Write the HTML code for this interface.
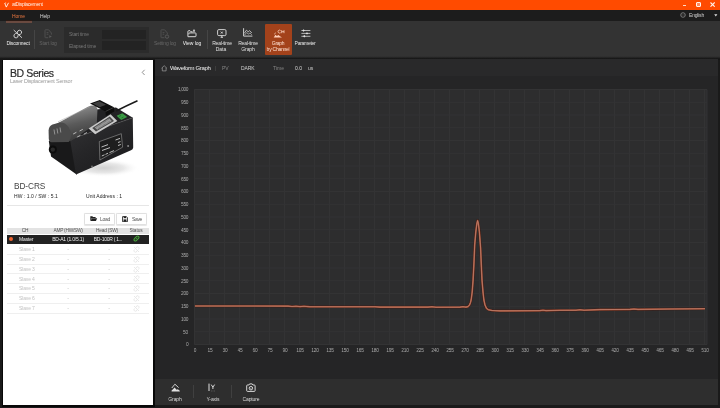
<!DOCTYPE html><html><head><meta charset="utf-8"><style>
html,body{margin:0;padding:0;width:720px;height:408px;overflow:hidden;background:#1a1a1a}
.b{position:absolute}
.t{position:absolute;white-space:nowrap;font-family:"Liberation Sans",sans-serif;line-height:1;will-change:transform}
</style></head><body>
<div class="b" style="left:0px;top:0px;width:720px;height:10px;background:#ff4b00;"></div>
<div class="b" style="left:0px;top:10px;width:720px;height:11px;background:#1c1c1c;"></div>
<div class="b" style="left:0px;top:21px;width:720px;height:35.5px;background:#333333;"></div>
<div class="b" style="left:0px;top:59px;width:720px;height:349px;background:#1a1a1a;"></div>
<div class="b" style="left:1.5px;top:58.3px;width:153.5px;height:348.7px;background:#080808;"></div>
<div class="b" style="left:0px;top:56px;width:720px;height:3.5px;background:linear-gradient(#333 0%,#2e2e2e 18%,#141414 72%,#181818 100%);"></div>
<div class="b" style="left:3px;top:59.6px;width:150px;height:345.9px;background:#ffffff;"></div>
<div class="b" style="left:155px;top:59.3px;width:562.6px;height:16.7px;background:#29292a;"></div>
<div class="b" style="left:155px;top:76px;width:562.6px;height:302.5px;background:#252526;"></div>
<div class="b" style="left:155px;top:378.5px;width:562.6px;height:26.8px;background:#2e2e2e;"></div>
<div class="t" style="left:12.00px;top:2.19px;font-size:5px;color:#ffeee6;letter-spacing:-0.28px;font-weight:400;">atDisplacement</div>
<svg class="b" style="left:3.5px;top:2px;" width="6" height="6" viewBox="0 0 6 6"><path d="M0.7 1.0 L2.3 5.1 L4.5 0.8" stroke="#fff" stroke-width="0.85" fill="none" stroke-linejoin="round"/><path d="M1.0 0.9 L2.2 0.9" stroke="#fff" stroke-width="0.5"/></svg>
<div class="b" style="left:682.6px;top:5.4px;width:3.7px;height:1.0px;background:#ffd8c4;"></div>
<div class="b" style="left:696px;top:2.1px;width:3px;height:3px;border:1px solid #fff3ec;border-radius:1px;background:#ff8a60"></div>
<svg class="b" style="left:710.3px;top:2.1px;" width="5.2" height="5.2" viewBox="0 0 5.2 5.2"><path d="M0.5 0.5 L4.7 4.7 M4.7 0.5 L0.5 4.7" stroke="#fff3ec" stroke-width="1.1"/></svg>
<div class="t" style="left:12.00px;top:13.89px;font-size:5px;color:#e67640;letter-spacing:-0.12px;font-weight:400;">Home</div>
<div class="t" style="left:40.00px;top:13.89px;font-size:5px;color:#d6d6d6;letter-spacing:-0.05px;font-weight:400;">Help</div>
<div class="b" style="left:5.5px;top:20px;width:26.5px;height:1px;background:#2a1a14;"></div>
<div class="b" style="left:5.5px;top:21.2px;width:26.5px;height:1.4px;background:#6a4a40;"></div>
<svg class="b" style="left:679.5px;top:12px;" width="6" height="6" viewBox="0 0 6 6"><circle cx="3" cy="3" r="2.3" fill="none" stroke="#999" stroke-width="0.7"/><path d="M0.8 3 L5.2 3" stroke="#777" stroke-width="0.4"/></svg>
<div class="t" style="left:689.40px;top:13.09px;font-size:5px;color:#d0d0d0;letter-spacing:-0.2px;font-weight:400;">English</div>
<svg class="b" style="left:713.5px;top:13.6px;" width="4" height="3" viewBox="0 0 4 3"><path d="M0.2 0.3 L3.4 0.3 L1.8 2.4Z" fill="#ddd"/></svg>
<div class="b" style="left:33.5px;top:30.3px;width:0.8px;height:18.400000000000002px;background:#454545;"></div>
<div class="b" style="left:206.5px;top:30.3px;width:0.8px;height:18.400000000000002px;background:#454545;"></div>
<div class="t" style="left:17.90px;transform:translateX(-50%);top:41.29px;font-size:5px;color:#f2f2f2;letter-spacing:-0.15px;font-weight:400;">Disconnect</div>
<div class="t" style="left:47.90px;transform:translateX(-50%);top:41.29px;font-size:5px;color:#666;letter-spacing:-0.12px;font-weight:400;">Start log</div>
<div class="b" style="left:64.3px;top:27.4px;width:85.2px;height:26.1px;background:#2b2b2b;"></div>
<div class="t" style="left:69.00px;top:32.19px;font-size:5px;color:#777;letter-spacing:-0.15px;font-weight:400;">Start time</div>
<div class="t" style="left:69.00px;top:43.69px;font-size:5px;color:#777;letter-spacing:-0.15px;font-weight:400;">Elapsed time</div>
<div class="b" style="left:101.8px;top:30px;width:44.2px;height:9px;background:#232323;"></div>
<div class="b" style="left:101.8px;top:41.4px;width:44.2px;height:8.8px;background:#232323;"></div>
<div class="t" style="left:164.80px;transform:translateX(-50%);top:41.49px;font-size:5px;color:#666;letter-spacing:-0.15px;font-weight:400;">Setting log</div>
<div class="t" style="left:191.60px;transform:translateX(-50%);top:41.49px;font-size:5px;color:#f2f2f2;letter-spacing:-0.05px;font-weight:400;">View log</div>
<div class="t" style="left:221.50px;transform:translateX(-50%);top:41.49px;font-size:5px;color:#e2e2e2;letter-spacing:-0.2px;font-weight:400;">Real-time</div>
<div class="t" style="left:220.80px;transform:translateX(-50%);top:46.79px;font-size:5px;color:#e2e2e2;letter-spacing:-0.05px;font-weight:400;">Data</div>
<div class="t" style="left:248.30px;transform:translateX(-50%);top:41.49px;font-size:5px;color:#e2e2e2;letter-spacing:-0.2px;font-weight:400;">Real-time</div>
<div class="t" style="left:247.70px;transform:translateX(-50%);top:46.79px;font-size:5px;color:#e2e2e2;letter-spacing:-0.1px;font-weight:400;">Graph</div>
<div class="b" style="left:265.1px;top:24.2px;width:27.1px;height:30.8px;background:#a3421b;border-radius:1px"></div>
<div class="t" style="left:278.40px;transform:translateX(-50%);top:41.29px;font-size:5px;color:#ffe2d4;letter-spacing:-0.3px;font-weight:400;">Graph</div>
<div class="t" style="left:278.40px;transform:translateX(-50%);top:46.89px;font-size:5px;color:#ffe2d4;letter-spacing:-0.25px;font-weight:400;">by Channel</div>
<div class="t" style="left:305.20px;transform:translateX(-50%);top:41.29px;font-size:5px;color:#e6e6e6;letter-spacing:-0.28px;font-weight:400;">Parameter</div>
<svg class="b" style="left:13px;top:28.5px;" width="10" height="10" viewBox="0 0 10 10"><g fill="none" stroke="#e0e0e0" stroke-width="0.9" stroke-linecap="round"><path d="M1 1.3 L8.7 8.5"/><path d="M4.6 4.4 L4.4 3.6 Q4.2 1.6 6.2 1.2 Q8.2 1.0 8.6 3.0 Q8.8 4.6 7.2 5.4 L6.2 5.6"/><path d="M5.0 6.0 L5.1 6.6 Q5.2 8.6 3.2 8.9 Q1.2 9.0 0.9 7.0 Q0.8 5.4 2.4 4.6 L3.4 4.4"/></g></svg>
<svg class="b" style="left:43.6px;top:28.6px;" width="9" height="10" viewBox="0 0 9 10"><g fill="none" stroke="#555" stroke-width="0.8"><path d="M4.2 8.7 L1.4 8.7 Q1 8.7 1 8.3 L1 1.2 Q1 0.8 1.4 0.8 L4.6 0.8 L7.4 4 L7.4 5.6"/><path d="M2.6 3.6 L4.4 3.6 M2.6 5.2 L4.4 5.2"/></g><path d="M5.3 6.3 L7.8 7.6 L5.3 8.9 Z" fill="#5a5a5a"/></svg>
<svg class="b" style="left:160.4px;top:28.6px;" width="10" height="10" viewBox="0 0 10 10"><g fill="none" stroke="#555" stroke-width="0.8"><path d="M4.4 8.7 L1.4 8.7 Q1 8.7 1 8.3 L1 1.2 Q1 0.8 1.4 0.8 L4.6 0.8 L7.4 4 L7.4 5.2"/><path d="M2.6 3.6 L4.4 3.6 M2.6 5.2 L4.2 5.2"/></g><circle cx="7" cy="7.6" r="1.7" fill="none" stroke="#5a5a5a" stroke-width="0.9"/></svg>
<svg class="b" style="left:186.6px;top:28.8px;" width="10" height="9" viewBox="0 0 10 9"><g fill="none" stroke="#e0e0e0" stroke-width="0.95" stroke-linejoin="round"><path d="M0.9 7.6 L0.9 2.6 Q0.9 1.7 1.8 1.7 L3 1.7 L4 2.8 L5.6 2.8"/><path d="M0.9 7.7 L8.2 7.7 Q9 7.7 9 6.9 L9 4.6 Q9 3.9 8.3 3.9 L2.6 3.9 Q1.9 3.9 1.9 4.6 L1.9 5.3"/></g><path d="M7 0.2 L8.3 1.6 L7.6 1.6 L7.6 3 L6.4 3 L6.4 1.6 L5.7 1.6 Z" fill="#e0e0e0"/></svg>
<svg class="b" style="left:216.6px;top:28.9px;" width="10" height="9" viewBox="0 0 10 9"><g fill="none" stroke="#e0e0e0" stroke-width="0.9"><rect x="0.6" y="0.6" width="8.4" height="6" rx="1.2"/><path d="M3.6 8.3 L6 8.3 M4.8 6.6 L4.8 8.3"/></g><path d="M3.4 2.5 L6.2 4.7 M6.2 2.5 L3.4 4.7" stroke="#e0e0e0" stroke-width="0.5"/><circle cx="4.8" cy="3.6" r="0.6" fill="#e0e0e0"/></svg>
<svg class="b" style="left:243px;top:28.3px;" width="10" height="9" viewBox="0 0 10 9"><g fill="none" stroke="#e0e0e0" stroke-width="0.9"><path d="M0.6 0.2 L0.6 8.1 L9.4 8.1"/></g><path d="M1.4 5.2 L3.4 2.2 L5.2 3.8 L6.6 2.6 L8.8 5" fill="none" stroke="#e0e0e0" stroke-width="0.75"/><path d="M1.6 7.0 L3.6 4.6 L5.4 6 L7 5 L8.8 6.8" fill="none" stroke="#e0e0e0" stroke-width="0.6"/></svg>
<svg class="b" style="left:273px;top:28.5px;" width="12" height="9" viewBox="0 0 12 9"><g fill="none" stroke="#ffd8c6" stroke-width="0.75"><path d="M7.6 1.5 Q6.9 0.9 6.2 1.1 Q5.0 1.5 5.0 2.6 Q5.1 3.8 6.3 4.1 Q7.1 4.2 7.6 3.7"/><path d="M8.7 1.2 L8.7 4.2 M11 1.2 L11 4.2 M8.7 2.7 L11 2.7"/><path d="M1.2 5.2 L2.8 3.8"/></g><path d="M0.7 8.4 L2.5 5.7 L3.9 7.0 L5.4 6.0 L7.0 7.2 L9 8.4 Z" fill="#ffd0bc"/></svg>
<svg class="b" style="left:300.6px;top:29px;" width="10" height="9" viewBox="0 0 10 9"><g stroke="#e0e0e0" stroke-width="0.75"><path d="M0.4 1.5 L9.4 1.5 M0.4 4.4 L9.4 4.4 M0.4 7.3 L9.4 7.3"/></g><g fill="#e0e0e0"><path d="M2.6 0.3 L3.8 1.5 L2.6 2.7 L1.4 1.5Z"/><path d="M6 3.2 L7.2 4.4 L6 5.6 L4.8 4.4Z"/><path d="M3.3 6.1 L4.5 7.3 L3.3 8.5 L2.1 7.3Z"/></g></svg>
<svg class="b" style="left:161px;top:65px;" width="6.5" height="6.5" viewBox="0 0 6.5 6.5"><path d="M0.6 3.2 L3.2 0.7 L5.8 3.2 M1.3 2.6 L1.3 5.9 L5.1 5.9 L5.1 2.6" fill="none" stroke="#a8a8a8" stroke-width="0.65"/></svg>
<div class="t" style="left:169.80px;top:65.41px;font-size:6px;color:#f0f0f0;letter-spacing:-0.36px;font-weight:400;">Waveform Graph</div>
<div class="b" style="left:215.4px;top:65.6px;width:0.6px;height:5.4px;background:#3c3c3c;"></div>
<div class="t" style="left:222.00px;top:66.49px;font-size:5px;color:#858585;letter-spacing:0px;font-weight:400;">PV</div>
<div class="t" style="left:240.50px;top:66.49px;font-size:5px;color:#cccccc;letter-spacing:-0.1px;font-weight:400;">DARK</div>
<div class="t" style="left:272.50px;top:66.49px;font-size:5px;color:#858585;letter-spacing:0px;font-weight:400;">Time</div>
<div class="t" style="left:295.00px;top:66.49px;font-size:5px;color:#dadada;letter-spacing:0.1px;font-weight:400;">0.0</div>
<div class="t" style="left:307.60px;top:66.49px;font-size:5px;color:#cccccc;letter-spacing:0px;font-weight:400;">us</div>
<svg class="b" style="left:0;top:0" width="720" height="408" viewBox="0 0 720 408"><rect x="194.0" y="89.0" width="513.0" height="256.0" fill="#2d2d2e"/><line x1="194.50" y1="89.5" x2="194.50" y2="344.5" stroke="#333334" stroke-width="1"/><line x1="209.50" y1="89.5" x2="209.50" y2="344.5" stroke="#333334" stroke-width="1"/><line x1="224.50" y1="89.5" x2="224.50" y2="344.5" stroke="#333334" stroke-width="1"/><line x1="239.50" y1="89.5" x2="239.50" y2="344.5" stroke="#333334" stroke-width="1"/><line x1="254.50" y1="89.5" x2="254.50" y2="344.5" stroke="#333334" stroke-width="1"/><line x1="269.50" y1="89.5" x2="269.50" y2="344.5" stroke="#333334" stroke-width="1"/><line x1="284.50" y1="89.5" x2="284.50" y2="344.5" stroke="#333334" stroke-width="1"/><line x1="299.50" y1="89.5" x2="299.50" y2="344.5" stroke="#333334" stroke-width="1"/><line x1="314.50" y1="89.5" x2="314.50" y2="344.5" stroke="#333334" stroke-width="1"/><line x1="329.50" y1="89.5" x2="329.50" y2="344.5" stroke="#333334" stroke-width="1"/><line x1="344.50" y1="89.5" x2="344.50" y2="344.5" stroke="#333334" stroke-width="1"/><line x1="359.50" y1="89.5" x2="359.50" y2="344.5" stroke="#333334" stroke-width="1"/><line x1="374.50" y1="89.5" x2="374.50" y2="344.5" stroke="#333334" stroke-width="1"/><line x1="389.50" y1="89.5" x2="389.50" y2="344.5" stroke="#333334" stroke-width="1"/><line x1="404.50" y1="89.5" x2="404.50" y2="344.5" stroke="#333334" stroke-width="1"/><line x1="419.50" y1="89.5" x2="419.50" y2="344.5" stroke="#333334" stroke-width="1"/><line x1="434.50" y1="89.5" x2="434.50" y2="344.5" stroke="#333334" stroke-width="1"/><line x1="449.50" y1="89.5" x2="449.50" y2="344.5" stroke="#333334" stroke-width="1"/><line x1="464.50" y1="89.5" x2="464.50" y2="344.5" stroke="#333334" stroke-width="1"/><line x1="479.50" y1="89.5" x2="479.50" y2="344.5" stroke="#333334" stroke-width="1"/><line x1="494.50" y1="89.5" x2="494.50" y2="344.5" stroke="#333334" stroke-width="1"/><line x1="509.50" y1="89.5" x2="509.50" y2="344.5" stroke="#333334" stroke-width="1"/><line x1="524.50" y1="89.5" x2="524.50" y2="344.5" stroke="#333334" stroke-width="1"/><line x1="539.50" y1="89.5" x2="539.50" y2="344.5" stroke="#333334" stroke-width="1"/><line x1="554.50" y1="89.5" x2="554.50" y2="344.5" stroke="#333334" stroke-width="1"/><line x1="569.50" y1="89.5" x2="569.50" y2="344.5" stroke="#333334" stroke-width="1"/><line x1="584.50" y1="89.5" x2="584.50" y2="344.5" stroke="#333334" stroke-width="1"/><line x1="599.50" y1="89.5" x2="599.50" y2="344.5" stroke="#333334" stroke-width="1"/><line x1="614.50" y1="89.5" x2="614.50" y2="344.5" stroke="#333334" stroke-width="1"/><line x1="629.50" y1="89.5" x2="629.50" y2="344.5" stroke="#333334" stroke-width="1"/><line x1="644.50" y1="89.5" x2="644.50" y2="344.5" stroke="#333334" stroke-width="1"/><line x1="659.50" y1="89.5" x2="659.50" y2="344.5" stroke="#333334" stroke-width="1"/><line x1="674.50" y1="89.5" x2="674.50" y2="344.5" stroke="#333334" stroke-width="1"/><line x1="689.50" y1="89.5" x2="689.50" y2="344.5" stroke="#333334" stroke-width="1"/><line x1="704.50" y1="89.5" x2="704.50" y2="344.5" stroke="#333334" stroke-width="1"/><line x1="707" y1="89.5" x2="707" y2="344.5" stroke="#333334" stroke-width="1"/><line x1="194.5" y1="344.50" x2="707" y2="344.50" stroke="#333334" stroke-width="1"/><line x1="194.5" y1="331.75" x2="707" y2="331.75" stroke="#333334" stroke-width="1"/><line x1="194.5" y1="319.00" x2="707" y2="319.00" stroke="#333334" stroke-width="1"/><line x1="194.5" y1="306.25" x2="707" y2="306.25" stroke="#333334" stroke-width="1"/><line x1="194.5" y1="293.50" x2="707" y2="293.50" stroke="#333334" stroke-width="1"/><line x1="194.5" y1="280.75" x2="707" y2="280.75" stroke="#333334" stroke-width="1"/><line x1="194.5" y1="268.00" x2="707" y2="268.00" stroke="#333334" stroke-width="1"/><line x1="194.5" y1="255.25" x2="707" y2="255.25" stroke="#333334" stroke-width="1"/><line x1="194.5" y1="242.50" x2="707" y2="242.50" stroke="#333334" stroke-width="1"/><line x1="194.5" y1="229.75" x2="707" y2="229.75" stroke="#333334" stroke-width="1"/><line x1="194.5" y1="217.00" x2="707" y2="217.00" stroke="#333334" stroke-width="1"/><line x1="194.5" y1="204.25" x2="707" y2="204.25" stroke="#333334" stroke-width="1"/><line x1="194.5" y1="191.50" x2="707" y2="191.50" stroke="#333334" stroke-width="1"/><line x1="194.5" y1="178.75" x2="707" y2="178.75" stroke="#333334" stroke-width="1"/><line x1="194.5" y1="166.00" x2="707" y2="166.00" stroke="#333334" stroke-width="1"/><line x1="194.5" y1="153.25" x2="707" y2="153.25" stroke="#333334" stroke-width="1"/><line x1="194.5" y1="140.50" x2="707" y2="140.50" stroke="#333334" stroke-width="1"/><line x1="194.5" y1="127.75" x2="707" y2="127.75" stroke="#333334" stroke-width="1"/><line x1="194.5" y1="115.00" x2="707" y2="115.00" stroke="#333334" stroke-width="1"/><line x1="194.5" y1="102.25" x2="707" y2="102.25" stroke="#333334" stroke-width="1"/><line x1="194.5" y1="89.50" x2="707" y2="89.50" stroke="#333334" stroke-width="1"/><path d="M194.9 306.0 L288.0 306.1 L292.0 306.5 L296.0 306.2 L300.0 306.6 L304.0 306.3 L308.0 306.6 L310.0 306.8 L375.0 306.8 L380.0 307.1 L428.0 307.1 L432.0 306.8 L436.0 307.2 L460.0 307.1 L463.0 306.7 L466.0 307.1 L468.0 306.6 L469.5 305.0 L470.5 302.5 L471.2 299.5 L472.2 292.0 L473.1 280.0 L474.0 262.0 L474.7 245.0 L475.8 232.0 L476.8 224.0 L477.6 220.6 L478.4 223.5 L479.4 232.0 L480.6 248.0 L481.3 265.0 L482.0 280.0 L483.0 292.0 L483.9 300.0 L485.0 305.0 L486.5 308.3 L488.5 309.8 L492.0 310.5 L500.0 310.9 L540.0 310.6 L543.0 310.2 L546.0 310.6 L560.0 310.3 L576.0 310.2 L580.0 309.8 L584.0 310.2 L600.0 309.6 L630.0 309.4 L634.0 309.0 L638.0 309.4 L670.0 309.0 L705.0 308.7" fill="none" stroke="#3e1c16" stroke-width="2.6" stroke-linejoin="round"/><path d="M194.9 306.0 L288.0 306.1 L292.0 306.5 L296.0 306.2 L300.0 306.6 L304.0 306.3 L308.0 306.6 L310.0 306.8 L375.0 306.8 L380.0 307.1 L428.0 307.1 L432.0 306.8 L436.0 307.2 L460.0 307.1 L463.0 306.7 L466.0 307.1 L468.0 306.6 L469.5 305.0 L470.5 302.5 L471.2 299.5 L472.2 292.0 L473.1 280.0 L474.0 262.0 L474.7 245.0 L475.8 232.0 L476.8 224.0 L477.6 220.6 L478.4 223.5 L479.4 232.0 L480.6 248.0 L481.3 265.0 L482.0 280.0 L483.0 292.0 L483.9 300.0 L485.0 305.0 L486.5 308.3 L488.5 309.8 L492.0 310.5 L500.0 310.9 L540.0 310.6 L543.0 310.2 L546.0 310.6 L560.0 310.3 L576.0 310.2 L580.0 309.8 L584.0 310.2 L600.0 309.6 L630.0 309.4 L634.0 309.0 L638.0 309.4 L670.0 309.0 L705.0 308.7" fill="none" stroke="#a4543a" stroke-width="1.6" stroke-linejoin="round"/><path d="M194.9 306.0 L288.0 306.1 L292.0 306.5 L296.0 306.2 L300.0 306.6 L304.0 306.3 L308.0 306.6 L310.0 306.8 L375.0 306.8 L380.0 307.1 L428.0 307.1 L432.0 306.8 L436.0 307.2 L460.0 307.1 L463.0 306.7 L466.0 307.1 L468.0 306.6 L469.5 305.0 L470.5 302.5 L471.2 299.5 L472.2 292.0 L473.1 280.0 L474.0 262.0 L474.7 245.0 L475.8 232.0 L476.8 224.0 L477.6 220.6 L478.4 223.5 L479.4 232.0 L480.6 248.0 L481.3 265.0 L482.0 280.0 L483.0 292.0 L483.9 300.0 L485.0 305.0 L486.5 308.3 L488.5 309.8 L492.0 310.5 L500.0 310.9 L540.0 310.6 L543.0 310.2 L546.0 310.6 L560.0 310.3 L576.0 310.2 L580.0 309.8 L584.0 310.2 L600.0 309.6 L630.0 309.4 L634.0 309.0 L638.0 309.4 L670.0 309.0 L705.0 308.7" fill="none" stroke="#c08474" stroke-width="0.7" stroke-linejoin="round"/></svg>
<div class="t" style="right:531.70px;top:343.39px;font-size:4.8px;color:#aaaaaa;letter-spacing:-0.25px;font-weight:400;">0</div>
<div class="t" style="right:531.70px;top:330.64px;font-size:4.8px;color:#aaaaaa;letter-spacing:-0.25px;font-weight:400;">50</div>
<div class="t" style="right:531.70px;top:317.89px;font-size:4.8px;color:#aaaaaa;letter-spacing:-0.25px;font-weight:400;">100</div>
<div class="t" style="right:531.70px;top:305.14px;font-size:4.8px;color:#aaaaaa;letter-spacing:-0.25px;font-weight:400;">150</div>
<div class="t" style="right:531.70px;top:292.39px;font-size:4.8px;color:#aaaaaa;letter-spacing:-0.25px;font-weight:400;">200</div>
<div class="t" style="right:531.70px;top:279.64px;font-size:4.8px;color:#aaaaaa;letter-spacing:-0.25px;font-weight:400;">250</div>
<div class="t" style="right:531.70px;top:266.89px;font-size:4.8px;color:#aaaaaa;letter-spacing:-0.25px;font-weight:400;">300</div>
<div class="t" style="right:531.70px;top:254.14px;font-size:4.8px;color:#aaaaaa;letter-spacing:-0.25px;font-weight:400;">350</div>
<div class="t" style="right:531.70px;top:241.39px;font-size:4.8px;color:#aaaaaa;letter-spacing:-0.25px;font-weight:400;">400</div>
<div class="t" style="right:531.70px;top:228.64px;font-size:4.8px;color:#aaaaaa;letter-spacing:-0.25px;font-weight:400;">450</div>
<div class="t" style="right:531.70px;top:215.89px;font-size:4.8px;color:#aaaaaa;letter-spacing:-0.25px;font-weight:400;">500</div>
<div class="t" style="right:531.70px;top:203.14px;font-size:4.8px;color:#aaaaaa;letter-spacing:-0.25px;font-weight:400;">550</div>
<div class="t" style="right:531.70px;top:190.39px;font-size:4.8px;color:#aaaaaa;letter-spacing:-0.25px;font-weight:400;">600</div>
<div class="t" style="right:531.70px;top:177.64px;font-size:4.8px;color:#aaaaaa;letter-spacing:-0.25px;font-weight:400;">650</div>
<div class="t" style="right:531.70px;top:164.89px;font-size:4.8px;color:#aaaaaa;letter-spacing:-0.25px;font-weight:400;">700</div>
<div class="t" style="right:531.70px;top:152.14px;font-size:4.8px;color:#aaaaaa;letter-spacing:-0.25px;font-weight:400;">750</div>
<div class="t" style="right:531.70px;top:139.39px;font-size:4.8px;color:#aaaaaa;letter-spacing:-0.25px;font-weight:400;">800</div>
<div class="t" style="right:531.70px;top:126.64px;font-size:4.8px;color:#aaaaaa;letter-spacing:-0.25px;font-weight:400;">850</div>
<div class="t" style="right:531.70px;top:113.89px;font-size:4.8px;color:#aaaaaa;letter-spacing:-0.25px;font-weight:400;">900</div>
<div class="t" style="right:531.70px;top:101.14px;font-size:4.8px;color:#aaaaaa;letter-spacing:-0.25px;font-weight:400;">950</div>
<div class="t" style="right:531.70px;top:88.39px;font-size:4.8px;color:#aaaaaa;letter-spacing:-0.38px;font-weight:400;">1,000</div>
<div class="t" style="left:194.50px;transform:translateX(-50%);top:349.09px;font-size:4.8px;color:#aaaaaa;letter-spacing:-0.25px;font-weight:400;">0</div>
<div class="t" style="left:209.50px;transform:translateX(-50%);top:349.09px;font-size:4.8px;color:#aaaaaa;letter-spacing:-0.25px;font-weight:400;">15</div>
<div class="t" style="left:224.50px;transform:translateX(-50%);top:349.09px;font-size:4.8px;color:#aaaaaa;letter-spacing:-0.25px;font-weight:400;">30</div>
<div class="t" style="left:239.50px;transform:translateX(-50%);top:349.09px;font-size:4.8px;color:#aaaaaa;letter-spacing:-0.25px;font-weight:400;">45</div>
<div class="t" style="left:254.50px;transform:translateX(-50%);top:349.09px;font-size:4.8px;color:#aaaaaa;letter-spacing:-0.25px;font-weight:400;">60</div>
<div class="t" style="left:269.50px;transform:translateX(-50%);top:349.09px;font-size:4.8px;color:#aaaaaa;letter-spacing:-0.25px;font-weight:400;">75</div>
<div class="t" style="left:284.50px;transform:translateX(-50%);top:349.09px;font-size:4.8px;color:#aaaaaa;letter-spacing:-0.25px;font-weight:400;">90</div>
<div class="t" style="left:299.50px;transform:translateX(-50%);top:349.09px;font-size:4.8px;color:#aaaaaa;letter-spacing:-0.25px;font-weight:400;">105</div>
<div class="t" style="left:314.50px;transform:translateX(-50%);top:349.09px;font-size:4.8px;color:#aaaaaa;letter-spacing:-0.25px;font-weight:400;">120</div>
<div class="t" style="left:329.50px;transform:translateX(-50%);top:349.09px;font-size:4.8px;color:#aaaaaa;letter-spacing:-0.25px;font-weight:400;">135</div>
<div class="t" style="left:344.50px;transform:translateX(-50%);top:349.09px;font-size:4.8px;color:#aaaaaa;letter-spacing:-0.25px;font-weight:400;">150</div>
<div class="t" style="left:359.50px;transform:translateX(-50%);top:349.09px;font-size:4.8px;color:#aaaaaa;letter-spacing:-0.25px;font-weight:400;">165</div>
<div class="t" style="left:374.50px;transform:translateX(-50%);top:349.09px;font-size:4.8px;color:#aaaaaa;letter-spacing:-0.25px;font-weight:400;">180</div>
<div class="t" style="left:389.50px;transform:translateX(-50%);top:349.09px;font-size:4.8px;color:#aaaaaa;letter-spacing:-0.25px;font-weight:400;">195</div>
<div class="t" style="left:404.50px;transform:translateX(-50%);top:349.09px;font-size:4.8px;color:#aaaaaa;letter-spacing:-0.25px;font-weight:400;">210</div>
<div class="t" style="left:419.50px;transform:translateX(-50%);top:349.09px;font-size:4.8px;color:#aaaaaa;letter-spacing:-0.25px;font-weight:400;">225</div>
<div class="t" style="left:434.50px;transform:translateX(-50%);top:349.09px;font-size:4.8px;color:#aaaaaa;letter-spacing:-0.25px;font-weight:400;">240</div>
<div class="t" style="left:449.50px;transform:translateX(-50%);top:349.09px;font-size:4.8px;color:#aaaaaa;letter-spacing:-0.25px;font-weight:400;">255</div>
<div class="t" style="left:464.50px;transform:translateX(-50%);top:349.09px;font-size:4.8px;color:#aaaaaa;letter-spacing:-0.25px;font-weight:400;">270</div>
<div class="t" style="left:479.50px;transform:translateX(-50%);top:349.09px;font-size:4.8px;color:#aaaaaa;letter-spacing:-0.25px;font-weight:400;">285</div>
<div class="t" style="left:494.50px;transform:translateX(-50%);top:349.09px;font-size:4.8px;color:#aaaaaa;letter-spacing:-0.25px;font-weight:400;">300</div>
<div class="t" style="left:509.50px;transform:translateX(-50%);top:349.09px;font-size:4.8px;color:#aaaaaa;letter-spacing:-0.25px;font-weight:400;">315</div>
<div class="t" style="left:524.50px;transform:translateX(-50%);top:349.09px;font-size:4.8px;color:#aaaaaa;letter-spacing:-0.25px;font-weight:400;">330</div>
<div class="t" style="left:539.50px;transform:translateX(-50%);top:349.09px;font-size:4.8px;color:#aaaaaa;letter-spacing:-0.25px;font-weight:400;">345</div>
<div class="t" style="left:554.50px;transform:translateX(-50%);top:349.09px;font-size:4.8px;color:#aaaaaa;letter-spacing:-0.25px;font-weight:400;">360</div>
<div class="t" style="left:569.50px;transform:translateX(-50%);top:349.09px;font-size:4.8px;color:#aaaaaa;letter-spacing:-0.25px;font-weight:400;">375</div>
<div class="t" style="left:584.50px;transform:translateX(-50%);top:349.09px;font-size:4.8px;color:#aaaaaa;letter-spacing:-0.25px;font-weight:400;">390</div>
<div class="t" style="left:599.50px;transform:translateX(-50%);top:349.09px;font-size:4.8px;color:#aaaaaa;letter-spacing:-0.25px;font-weight:400;">405</div>
<div class="t" style="left:614.50px;transform:translateX(-50%);top:349.09px;font-size:4.8px;color:#aaaaaa;letter-spacing:-0.25px;font-weight:400;">420</div>
<div class="t" style="left:629.50px;transform:translateX(-50%);top:349.09px;font-size:4.8px;color:#aaaaaa;letter-spacing:-0.25px;font-weight:400;">435</div>
<div class="t" style="left:644.50px;transform:translateX(-50%);top:349.09px;font-size:4.8px;color:#aaaaaa;letter-spacing:-0.25px;font-weight:400;">450</div>
<div class="t" style="left:659.50px;transform:translateX(-50%);top:349.09px;font-size:4.8px;color:#aaaaaa;letter-spacing:-0.25px;font-weight:400;">465</div>
<div class="t" style="left:674.50px;transform:translateX(-50%);top:349.09px;font-size:4.8px;color:#aaaaaa;letter-spacing:-0.25px;font-weight:400;">480</div>
<div class="t" style="left:689.50px;transform:translateX(-50%);top:349.09px;font-size:4.8px;color:#aaaaaa;letter-spacing:-0.25px;font-weight:400;">495</div>
<div class="t" style="left:704.50px;transform:translateX(-50%);top:349.09px;font-size:4.8px;color:#aaaaaa;letter-spacing:-0.25px;font-weight:400;">510</div>
<div class="b" style="left:193.4px;top:384.5px;width:0.7px;height:13px;background:#404040;"></div>
<div class="b" style="left:231.3px;top:384.5px;width:0.7px;height:13px;background:#404040;"></div>
<div class="t" style="left:175.00px;transform:translateX(-50%);top:396.89px;font-size:5px;color:#dcdcdc;letter-spacing:-0.1px;font-weight:400;">Graph</div>
<div class="t" style="left:213.00px;transform:translateX(-50%);top:396.89px;font-size:5px;color:#dcdcdc;letter-spacing:-0.1px;font-weight:400;">Y-axis</div>
<div class="t" style="left:250.50px;transform:translateX(-50%);top:396.89px;font-size:5px;color:#dcdcdc;letter-spacing:-0.12px;font-weight:400;">Capture</div>
<svg class="b" style="left:170.5px;top:383px;" width="10" height="9" viewBox="0 0 10 9"><g fill="none" stroke="#e0e0e0" stroke-width="0.9" stroke-linejoin="round"><path d="M0.8 5 L3.9 1.2 L7.6 4.6"/></g><path d="M0.6 8.6 L0.6 7.6 L2 6.2 L3.6 4.4 L5.6 6.8 L6.8 6.2 L8.8 7.8 L8.8 8.6 Z" fill="#e0e0e0"/></svg>
<svg class="b" style="left:208.3px;top:383.2px;" width="9" height="9" viewBox="0 0 9 9"><path d="M1 0.6 L1 8" stroke="#e0e0e0" stroke-width="1.0"/><path d="M3.2 1.6 L4.9 4.2 L6.6 1.6 M4.9 4.2 L4.9 6" fill="none" stroke="#e0e0e0" stroke-width="0.95"/><path d="M3.2 8 L3.8 8 M4.7 8 L5.3 8 M6.2 8 L6.8 8" stroke="#999" stroke-width="0.6"/></svg>
<svg class="b" style="left:245.6px;top:382.8px;" width="10" height="9" viewBox="0 0 10 9"><g fill="none" stroke="#e0e0e0" stroke-width="0.95" stroke-linejoin="round"><path d="M0.7 2.8 Q0.7 2 1.5 2 L2.9 2 L3.6 0.9 L6.2 0.9 L6.9 2 L8.3 2 Q9.1 2 9.1 2.8 L9.1 7.6 Q9.1 8.4 8.3 8.4 L1.5 8.4 Q0.7 8.4 0.7 7.6 Z"/><circle cx="4.9" cy="5.2" r="1.75"/></g><circle cx="4.9" cy="5.2" r="0.5" fill="#e0e0e0"/></svg>
<div class="t" style="left:10.00px;top:67.64px;font-size:10.5px;color:#2e2e2e;letter-spacing:-0.4px;font-weight:400;-webkit-text-stroke:0.2px #2e2e2e;">BD Series</div>
<div class="t" style="left:10.00px;top:78.95px;font-size:5.5px;color:#9a9a9a;letter-spacing:-0.22px;font-weight:400;">Laser Displacement Sensor</div>
<svg class="b" style="left:140.5px;top:69.2px;" width="5" height="7" viewBox="0 0 5 7"><path d="M3.6 0.8 L1.2 3.4 L3.6 6" stroke="#777" stroke-width="0.8" fill="none"/></svg>
<div class="t" style="left:14.40px;top:182.10px;font-size:8.3px;color:#444;letter-spacing:-0.1px;font-weight:400;">BD-CRS</div>
<div class="t" style="left:14.20px;top:194.29px;font-size:5px;color:#222;letter-spacing:0.05px;font-weight:400;">HW : 1.0 / SW : 5.1</div>
<div class="t" style="left:85.60px;top:194.29px;font-size:5px;color:#222;letter-spacing:0.05px;font-weight:400;">Unit Address : 1</div>
<div class="b" style="left:6.7px;top:205px;width:142.3px;height:0.6px;background:#e6e6e6;"></div>
<div class="b" style="left:84.4px;top:213.3px;width:28.8px;height:9.9px;border:0.6px solid #e0e0e0;border-radius:1.2px;background:#fff;box-shadow:0 0.6px 0.8px #e6e6e6"></div>
<div class="b" style="left:116.2px;top:213.3px;width:28.8px;height:9.9px;border:0.6px solid #e0e0e0;border-radius:1.2px;background:#fff;box-shadow:0 0.6px 0.8px #e6e6e6"></div>
<div class="t" style="left:99.50px;top:216.69px;font-size:5px;color:#555;letter-spacing:-0.25px;font-weight:400;">Load</div>
<div class="t" style="left:131.60px;top:216.69px;font-size:5px;color:#555;letter-spacing:-0.35px;font-weight:400;">Save</div>
<svg class="b" style="left:90px;top:215.8px;" width="7.5" height="5.5" viewBox="0 0 7.5 5.5"><path d="M0.3 0.3 L2.4 0.3 L3 1 L5.6 1 L5.6 2 L1.8 2 L0.3 5.2 Z" fill="#222"/><path d="M1.8 2.2 L7.2 2.2 L5.8 5.2 L0.4 5.2 Z" fill="#222"/></svg>
<svg class="b" style="left:122px;top:215.6px;" width="6" height="6.4" viewBox="0 0 6 6.4"><path d="M0.6 0.6 L4.4 0.6 L5.4 1.6 L5.4 5.8 L0.6 5.8 Z" fill="none" stroke="#222" stroke-width="0.9"/><rect x="1.8" y="0.6" width="2.4" height="1.6" fill="#222"/><rect x="1.6" y="3.4" width="2.8" height="2.4" fill="#222"/></svg>
<div class="b" style="left:7px;top:227.6px;width:142px;height:6.2px;background:#e3e3e3;"></div>
<div class="t" style="left:25.40px;transform:translateX(-50%);top:229.29px;font-size:4.8px;color:#555;letter-spacing:-0.1px;font-weight:400;">CH</div>
<div class="t" style="left:68.00px;transform:translateX(-50%);top:229.29px;font-size:4.8px;color:#555;letter-spacing:-0.25px;font-weight:400;">AMP (HW/SW)</div>
<div class="t" style="left:107.00px;transform:translateX(-50%);top:229.29px;font-size:4.8px;color:#555;letter-spacing:-0.2px;font-weight:400;">Head (SW)</div>
<div class="t" style="left:135.50px;transform:translateX(-50%);top:229.29px;font-size:4.8px;color:#555;letter-spacing:-0.1px;font-weight:400;">Status</div>
<div class="b" style="left:7px;top:234.6px;width:142px;height:9.4px;background:#222222;"></div>
<div class="b" style="left:9.1px;top:237.2px;width:4px;height:4px;border-radius:50%;background:#ee6430"></div>
<div class="t" style="left:19.40px;top:237.19px;font-size:5px;color:#f2f2f2;letter-spacing:-0.15px;font-weight:400;">Master</div>
<div class="t" style="left:67.80px;transform:translateX(-50%);top:237.19px;font-size:5px;color:#eeeeee;letter-spacing:-0.2px;font-weight:400;">BD-A1 (1.0/5.1)</div>
<div class="t" style="left:108.20px;transform:translateX(-50%);top:237.19px;font-size:5px;color:#eeeeee;letter-spacing:-0.25px;font-weight:400;">BD-100R ( 1...</div>
<svg class="b" style="left:132.6px;top:235.4px;" width="7" height="7" viewBox="0 0 7 7"><g transform="rotate(-45 3.5 3.5)"><rect x="0.6" y="2.2" width="5.8" height="2.6" rx="1.3" fill="none" stroke="#48a23c" stroke-width="1.1"/><path d="M2.4 3.5 L4.6 3.5" stroke="#48a23c" stroke-width="0.8"/></g></svg>
<div class="t" style="left:19.40px;top:247.19px;font-size:5px;color:#c2c2c2;letter-spacing:-0.15px;font-weight:400;">Slave 1</div>
<div class="t" style="left:67.80px;transform:translateX(-50%);top:247.19px;font-size:5px;color:#bbb;letter-spacing:0px;font-weight:400;">-</div>
<div class="t" style="left:108.70px;transform:translateX(-50%);top:247.19px;font-size:5px;color:#bbb;letter-spacing:0px;font-weight:400;">-</div>
<div class="b" style="left:7px;top:253.79999999999998px;width:142px;height:0.55px;background:#efefef;"></div>
<svg class="b" style="left:132.9px;top:245.89999999999998px;" width="7" height="7" viewBox="0 0 7 7"><g fill="none" stroke="#d6d6d6" stroke-width="0.55"><path d="M1 1 L6 6"/><path d="M3.2 2.2 Q3.2 1 4.3 0.8 Q5.6 0.6 6 1.8 Q6.3 2.8 5.3 3.6"/><path d="M3.8 4.8 Q3.8 6 2.7 6.2 Q1.4 6.4 1 5.2 Q0.7 4.2 1.7 3.4"/></g></svg>
<div class="t" style="left:19.40px;top:256.99px;font-size:5px;color:#c2c2c2;letter-spacing:-0.15px;font-weight:400;">Slave 2</div>
<div class="t" style="left:67.80px;transform:translateX(-50%);top:256.99px;font-size:5px;color:#bbb;letter-spacing:0px;font-weight:400;">-</div>
<div class="t" style="left:108.70px;transform:translateX(-50%);top:256.99px;font-size:5px;color:#bbb;letter-spacing:0px;font-weight:400;">-</div>
<div class="b" style="left:7px;top:263.6px;width:142px;height:0.55px;background:#efefef;"></div>
<svg class="b" style="left:132.9px;top:255.7px;" width="7" height="7" viewBox="0 0 7 7"><g fill="none" stroke="#d6d6d6" stroke-width="0.55"><path d="M1 1 L6 6"/><path d="M3.2 2.2 Q3.2 1 4.3 0.8 Q5.6 0.6 6 1.8 Q6.3 2.8 5.3 3.6"/><path d="M3.8 4.8 Q3.8 6 2.7 6.2 Q1.4 6.4 1 5.2 Q0.7 4.2 1.7 3.4"/></g></svg>
<div class="t" style="left:19.40px;top:266.79px;font-size:5px;color:#c2c2c2;letter-spacing:-0.15px;font-weight:400;">Slave 3</div>
<div class="t" style="left:67.80px;transform:translateX(-50%);top:266.79px;font-size:5px;color:#bbb;letter-spacing:0px;font-weight:400;">-</div>
<div class="t" style="left:108.70px;transform:translateX(-50%);top:266.79px;font-size:5px;color:#bbb;letter-spacing:0px;font-weight:400;">-</div>
<div class="b" style="left:7px;top:273.40000000000003px;width:142px;height:0.55px;background:#efefef;"></div>
<svg class="b" style="left:132.9px;top:265.5px;" width="7" height="7" viewBox="0 0 7 7"><g fill="none" stroke="#d6d6d6" stroke-width="0.55"><path d="M1 1 L6 6"/><path d="M3.2 2.2 Q3.2 1 4.3 0.8 Q5.6 0.6 6 1.8 Q6.3 2.8 5.3 3.6"/><path d="M3.8 4.8 Q3.8 6 2.7 6.2 Q1.4 6.4 1 5.2 Q0.7 4.2 1.7 3.4"/></g></svg>
<div class="t" style="left:19.40px;top:276.59px;font-size:5px;color:#c2c2c2;letter-spacing:-0.15px;font-weight:400;">Slave 4</div>
<div class="t" style="left:67.80px;transform:translateX(-50%);top:276.59px;font-size:5px;color:#bbb;letter-spacing:0px;font-weight:400;">-</div>
<div class="t" style="left:108.70px;transform:translateX(-50%);top:276.59px;font-size:5px;color:#bbb;letter-spacing:0px;font-weight:400;">-</div>
<div class="b" style="left:7px;top:283.2px;width:142px;height:0.55px;background:#efefef;"></div>
<svg class="b" style="left:132.9px;top:275.29999999999995px;" width="7" height="7" viewBox="0 0 7 7"><g fill="none" stroke="#d6d6d6" stroke-width="0.55"><path d="M1 1 L6 6"/><path d="M3.2 2.2 Q3.2 1 4.3 0.8 Q5.6 0.6 6 1.8 Q6.3 2.8 5.3 3.6"/><path d="M3.8 4.8 Q3.8 6 2.7 6.2 Q1.4 6.4 1 5.2 Q0.7 4.2 1.7 3.4"/></g></svg>
<div class="t" style="left:19.40px;top:286.39px;font-size:5px;color:#c2c2c2;letter-spacing:-0.15px;font-weight:400;">Slave 5</div>
<div class="t" style="left:67.80px;transform:translateX(-50%);top:286.39px;font-size:5px;color:#bbb;letter-spacing:0px;font-weight:400;">-</div>
<div class="t" style="left:108.70px;transform:translateX(-50%);top:286.39px;font-size:5px;color:#bbb;letter-spacing:0px;font-weight:400;">-</div>
<div class="b" style="left:7px;top:293.0px;width:142px;height:0.55px;background:#efefef;"></div>
<svg class="b" style="left:132.9px;top:285.09999999999997px;" width="7" height="7" viewBox="0 0 7 7"><g fill="none" stroke="#d6d6d6" stroke-width="0.55"><path d="M1 1 L6 6"/><path d="M3.2 2.2 Q3.2 1 4.3 0.8 Q5.6 0.6 6 1.8 Q6.3 2.8 5.3 3.6"/><path d="M3.8 4.8 Q3.8 6 2.7 6.2 Q1.4 6.4 1 5.2 Q0.7 4.2 1.7 3.4"/></g></svg>
<div class="t" style="left:19.40px;top:296.19px;font-size:5px;color:#c2c2c2;letter-spacing:-0.15px;font-weight:400;">Slave 6</div>
<div class="t" style="left:67.80px;transform:translateX(-50%);top:296.19px;font-size:5px;color:#bbb;letter-spacing:0px;font-weight:400;">-</div>
<div class="t" style="left:108.70px;transform:translateX(-50%);top:296.19px;font-size:5px;color:#bbb;letter-spacing:0px;font-weight:400;">-</div>
<div class="b" style="left:7px;top:302.8px;width:142px;height:0.55px;background:#efefef;"></div>
<svg class="b" style="left:132.9px;top:294.9px;" width="7" height="7" viewBox="0 0 7 7"><g fill="none" stroke="#d6d6d6" stroke-width="0.55"><path d="M1 1 L6 6"/><path d="M3.2 2.2 Q3.2 1 4.3 0.8 Q5.6 0.6 6 1.8 Q6.3 2.8 5.3 3.6"/><path d="M3.8 4.8 Q3.8 6 2.7 6.2 Q1.4 6.4 1 5.2 Q0.7 4.2 1.7 3.4"/></g></svg>
<div class="t" style="left:19.40px;top:305.99px;font-size:5px;color:#c2c2c2;letter-spacing:-0.15px;font-weight:400;">Slave 7</div>
<div class="t" style="left:67.80px;transform:translateX(-50%);top:305.99px;font-size:5px;color:#bbb;letter-spacing:0px;font-weight:400;">-</div>
<div class="t" style="left:108.70px;transform:translateX(-50%);top:305.99px;font-size:5px;color:#bbb;letter-spacing:0px;font-weight:400;">-</div>
<div class="b" style="left:7px;top:312.6px;width:142px;height:0.55px;background:#efefef;"></div>
<svg class="b" style="left:132.9px;top:304.7px;" width="7" height="7" viewBox="0 0 7 7"><g fill="none" stroke="#d6d6d6" stroke-width="0.55"><path d="M1 1 L6 6"/><path d="M3.2 2.2 Q3.2 1 4.3 0.8 Q5.6 0.6 6 1.8 Q6.3 2.8 5.3 3.6"/><path d="M3.8 4.8 Q3.8 6 2.7 6.2 Q1.4 6.4 1 5.2 Q0.7 4.2 1.7 3.4"/></g></svg>
<svg class="b" style="left:0;top:0" width="160" height="185" viewBox="0 0 160 185"><defs><linearGradient id="cov" x1="0.2" y1="0" x2="0.5" y2="1"><stop offset="0" stop-color="#6c6c6c"/><stop offset="0.25" stop-color="#7e7e7e"/><stop offset="0.55" stop-color="#5a5a5a"/><stop offset="1" stop-color="#383838"/></linearGradient><linearGradient id="frt" x1="0" y1="0" x2="0.7" y2="1"><stop offset="0" stop-color="#343436"/><stop offset="0.5" stop-color="#262628"/><stop offset="1" stop-color="#1c1c1e"/></linearGradient><radialGradient id="shd" cx="0.5" cy="0.5" r="0.5"><stop offset="0" stop-color="#d0d0d0"/><stop offset="0.55" stop-color="#e8e8e8"/><stop offset="1" stop-color="#fff" stop-opacity="0"/></radialGradient></defs><ellipse cx="104" cy="168" rx="36" ry="9" fill="url(#shd)"/><path d="M48.8 141 L71.5 139.2 L77 174.8 L51 156.5 Z" fill="#19191a"/><circle cx="52.8" cy="149.6" r="4" fill="#0c0c0c"/><circle cx="52.8" cy="149.6" r="2.2" fill="#2a2a2a"/><path d="M70 139.5 L132.8 117.8 L116 107.5 L96 109.5 L95 124 Z" fill="#222224"/><path d="M70 139.5 L132.8 117.8 L133.2 147.5 Q133 149.5 131 150.3 L76 174.5 Z" fill="url(#frt)"/><path d="M70 139.5 L132.8 117.8" stroke="#4a4a4c" stroke-width="0.7"/><path d="M50 130 Q50.5 126 54.3 125 L88 106.8 Q92 104.8 96 106 L97.5 109 L96.8 123.2 L71 141 L62 142 Z" fill="url(#cov)"/><path d="M58 121.8 L90.5 106.5" stroke="#a4a4a4" stroke-width="0.9" opacity="0.6"/><path d="M48.6 130.5 Q48.8 126 52.5 124.5 L59.9 122.6 Q64.5 122 68.5 127 L70.9 132 Q71.8 135 70.5 138.5 L68.7 141.9 L51.5 142.2 Q49 142 48.8 139 Z" fill="#4a4a4a"/><path d="M54 129.5 L54.8 134.5 M57 128.5 L57.8 133.5 M60 127.5 L60.8 132.5" stroke="#9a9a9a" stroke-width="0.9"/><path d="M90 103.5 L99.8 99.9 L114 107.3 L114.3 111.5 L105.8 116 L105.5 111.5 Z" fill="#0e0e0e"/><path d="M92.8 103.6 L99.2 101.2 L106 104.8 L99.6 107.2 Z" fill="#3e3e3e"/><path d="M105.6 111.4 L114 107.3" stroke="#555" stroke-width="0.6"/><path d="M88.6 128.6 L110.6 114.3 L117.3 120.9 L95.2 134.2 Z" fill="#cacaca"/><path d="M92.2 127.9 L109.8 116.6 L114 121 L96 131.6 Z" fill="#4a4a4a"/><path d="M94.6 127.6 L109.2 118.3 L111.8 121 L97.2 129.7 Z" fill="#9a9a9a"/><path d="M96.5 127.2 L108.5 119.6 M98 128.6 L110 121" stroke="#333" stroke-width="0.5" stroke-dasharray="0.7 0.8"/><path d="M116.6 115.8 L122.4 113.2 L127.2 117 L121.2 120 Z" fill="#3a9a44"/><path d="M119 116.5 L121 115.5 M121.5 118 L123.5 117" stroke="#1a5a22" stroke-width="0.6"/><path d="M116.2 111 Q126 106 137.5 100.8" stroke="#1a1a1a" stroke-width="1.5" fill="none"/><path d="M73.2 134 L76.4 132.3 M77.2 137 L80.4 135.3 M79.6 131 L82.8 129.3 M83.8 134.2 L87 132.5" stroke="#d8d8d8" stroke-width="0.8"/><path d="M99.3 141.6 L121.3 133.7 L122.6 147.2 L99.9 160 Z" fill="#1e1e1e" stroke="#b0b0b0" stroke-width="0.5"/><path d="M101.5 147 L108 144.6 M102 150.5 L110 147.6 M101.8 156 L104.5 154.8 M105.5 154.4 L108 153.2 M109.5 152.6 L114 150.6 M115.5 140 L120 138.4 M118 142.5 L120.5 141.6 M118 145.5 L120.8 144.5" stroke="#d0d0d0" stroke-width="0.9"/><circle cx="128.1" cy="145.9" r="1" fill="#888"/><circle cx="92" cy="166.5" r="0.9" fill="#777"/></svg>
</body></html>
